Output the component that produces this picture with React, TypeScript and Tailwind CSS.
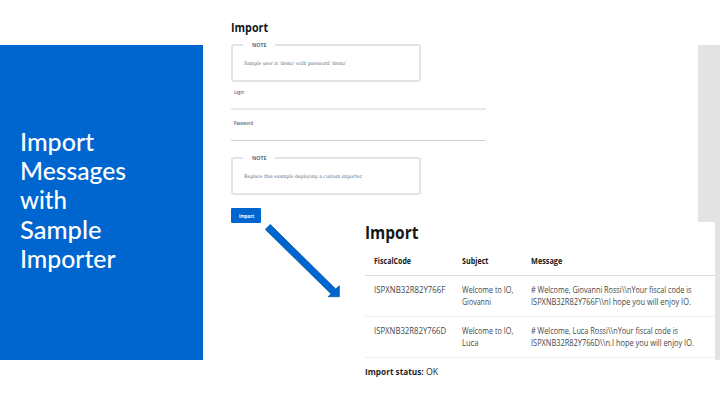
import { useLayoutEffect, useRef, useState } from "react";

const SANS = "font-['Open_Sans','Noto_Sans',sans-serif]";
const SERIF = "font-['DejaVu_Serif',serif]";

type FitProps = { children: string; width: number; className?: string };

/** One line of text, condensed or widened to a given width. */
function Fit({ children, width, className = "" }: FitProps) {
  const ref = useRef<HTMLSpanElement>(null);
  const [scale, setScale] = useState(1);
  useLayoutEffect(() => {
    if (ref.current) setScale(width / Math.max(1, ref.current.offsetWidth));
  }, [width, children]);
  return (
    <span className={`block ${className}`} style={{ width }}>
      <span
        ref={ref}
        className="inline-block origin-left whitespace-pre align-top"
        style={{ transform: `scaleX(${scale})` }}
      >
        {children}
      </span>
    </span>
  );
}

function Note({ text, width }: { text: string; width: number }) {
  return (
    <div className="flex h-[37.5px] w-[190px] flex-col rounded-[3px] border-2 border-[#dfe4e9]">
      <div className="-mt-[6px] ml-[10px] flex h-[10px] w-8 items-center justify-center bg-white">
        <Fit width={15} className="text-[6px] font-bold leading-[10px] text-[#5b6d82]">NOTE</Fit>
      </div>
      <Fit width={width} className={`ml-[10.5px] mt-[8px] text-[5px] leading-[10px] text-[#5d7086] ${SERIF}`}>{text}</Fit>
    </div>
  );
}

type Row = { code: string; codeWidth: number; subject: [string, number][]; message: [string, number][] };

const rows: Row[] = [
  {
    code: "ISPXNB32R82Y766F",
    codeWidth: 71,
    subject: [["Welcome to IO,", 51], ["Giovanni", 29]],
    message: [
      ["# Welcome, Giovanni Rossi\\\\nYour fiscal code is", 160],
      ["ISPXNB32R82Y766F\\\\nI hope you will enjoy IO.", 160],
    ],
  },
  {
    code: "ISPXNB32R82Y766D",
    codeWidth: 72,
    subject: [["Welcome to IO,", 51], ["Luca", 16]],
    message: [
      ["# Welcome, Luca Rossi\\\\nYour fiscal code is", 147],
      ["ISPXNB32R82Y766D\\\\n.I hope you will enjoy IO.", 163],
    ],
  },
];

const columns = "grid grid-cols-[88px_69px_1fr] pl-[8.5px]";

function Lines({ lines }: { lines: [string, number][] }) {
  return (
    <div>
      {lines.map(([text, width]) => (
        <Fit key={text} width={width}>{text}</Fit>
      ))}
    </div>
  );
}

function ResultPanel() {
  return (
    <section className="absolute left-[365px] top-[222px] h-[160px] w-[350px] bg-white">
      <Fit width={53} className="h-5 text-[17.5px] font-bold leading-5 text-[#151719]">Import</Fit>
      <div className={`${columns} h-[34px] border-b border-[#dadee2] pt-[13px] text-[8px] font-bold leading-3 text-[#191b1d]`}>
        <Fit width={37}>FiscalCode</Fit>
        <Fit width={26}>Subject</Fit>
        <Fit width={31}>Message</Fit>
      </div>
      {rows.map((row) => (
        <div key={row.code} className={`${columns} h-[41px] border-b border-[#eceeef] pt-2 text-[8.5px] leading-3 text-[#45484b]`}>
          <Fit width={row.codeWidth}>{row.code}</Fit>
          <Lines lines={row.subject} />
          <Lines lines={row.message} />
        </div>
      ))}
      <div className="flex gap-[2px] pt-2 text-[9.5px] leading-3 text-[#222426]">
        <Fit width={59} className="font-bold">Import status:</Fit>
        <Fit width={12}>OK</Fit>
      </div>
    </section>
  );
}

export default function App() {
  return (
    <main className={`relative flex h-[405px] w-[720px] overflow-hidden bg-white ${SANS}`}>
      <aside className="mt-[45px] flex h-[315px] w-[203px] items-center bg-[#0066cf] pl-5 font-[Lato,sans-serif] text-[24px] font-medium leading-[29.2px] text-white">
        <h1 className="pb-[5px]">
          <Fit width={74}>Import</Fit>
          <Fit width={106}>Messages</Fit>
          <Fit width={47}>with</Fit>
          <Fit width={82}>Sample</Fit>
          <Fit width={96}>Importer</Fit>
        </h1>
      </aside>

      <section className="flex w-[495px] flex-col items-start pl-7 pt-5">
        <Fit width={37} className="h-4 text-[12.5px] font-bold leading-4 text-[#151719]">Import</Fit>
        <div className="mt-2">
          <Note text="Sample user is 'demo' with password 'demo'" width={102} />
        </div>
        <div className="mt-[5.5px] h-[23px] w-[255px] border-b-2 border-[#e5e9ed] pl-[3px]">
          <Fit width={10} className="text-[4.5px] font-semibold leading-[10px] text-[#53657a]">Login</Fit>
        </div>
        <div className="mt-2 h-[23px] w-[255px] border-b border-[#cdd2d7] pl-[3px]">
          <Fit width={19} className="text-[4.5px] font-semibold leading-[10px] text-[#53657a]">Password</Fit>
        </div>
        <div className="mt-4">
          <Note text="Replace this example deploying a custom importer." width={119} />
        </div>
        <button className="mt-[13.5px] flex h-[15px] w-[30px] items-center justify-center rounded-[1px] bg-[#0066cf]">
          <Fit width={15} className="text-left text-[5px] font-bold leading-[10px] text-white">Import</Fit>
        </button>
      </section>

      <div className="mt-[45px] h-[315px] w-[22px] bg-[#e3e3e3]" />

      <ResultPanel />

      <svg className="absolute left-[260px] top-[220px]" width="84" height="80" viewBox="260 220 84 80">
        <path
          d="M270.2 224.4 L335.7 289 L339.3 285.7 V296.7 H328.2 L331 293.8 L265.3 229.4 Z"
          fill="#0066cf"
          stroke="#0d559f"
          strokeWidth="0.8"
        />
      </svg>
    </main>
  );
}
